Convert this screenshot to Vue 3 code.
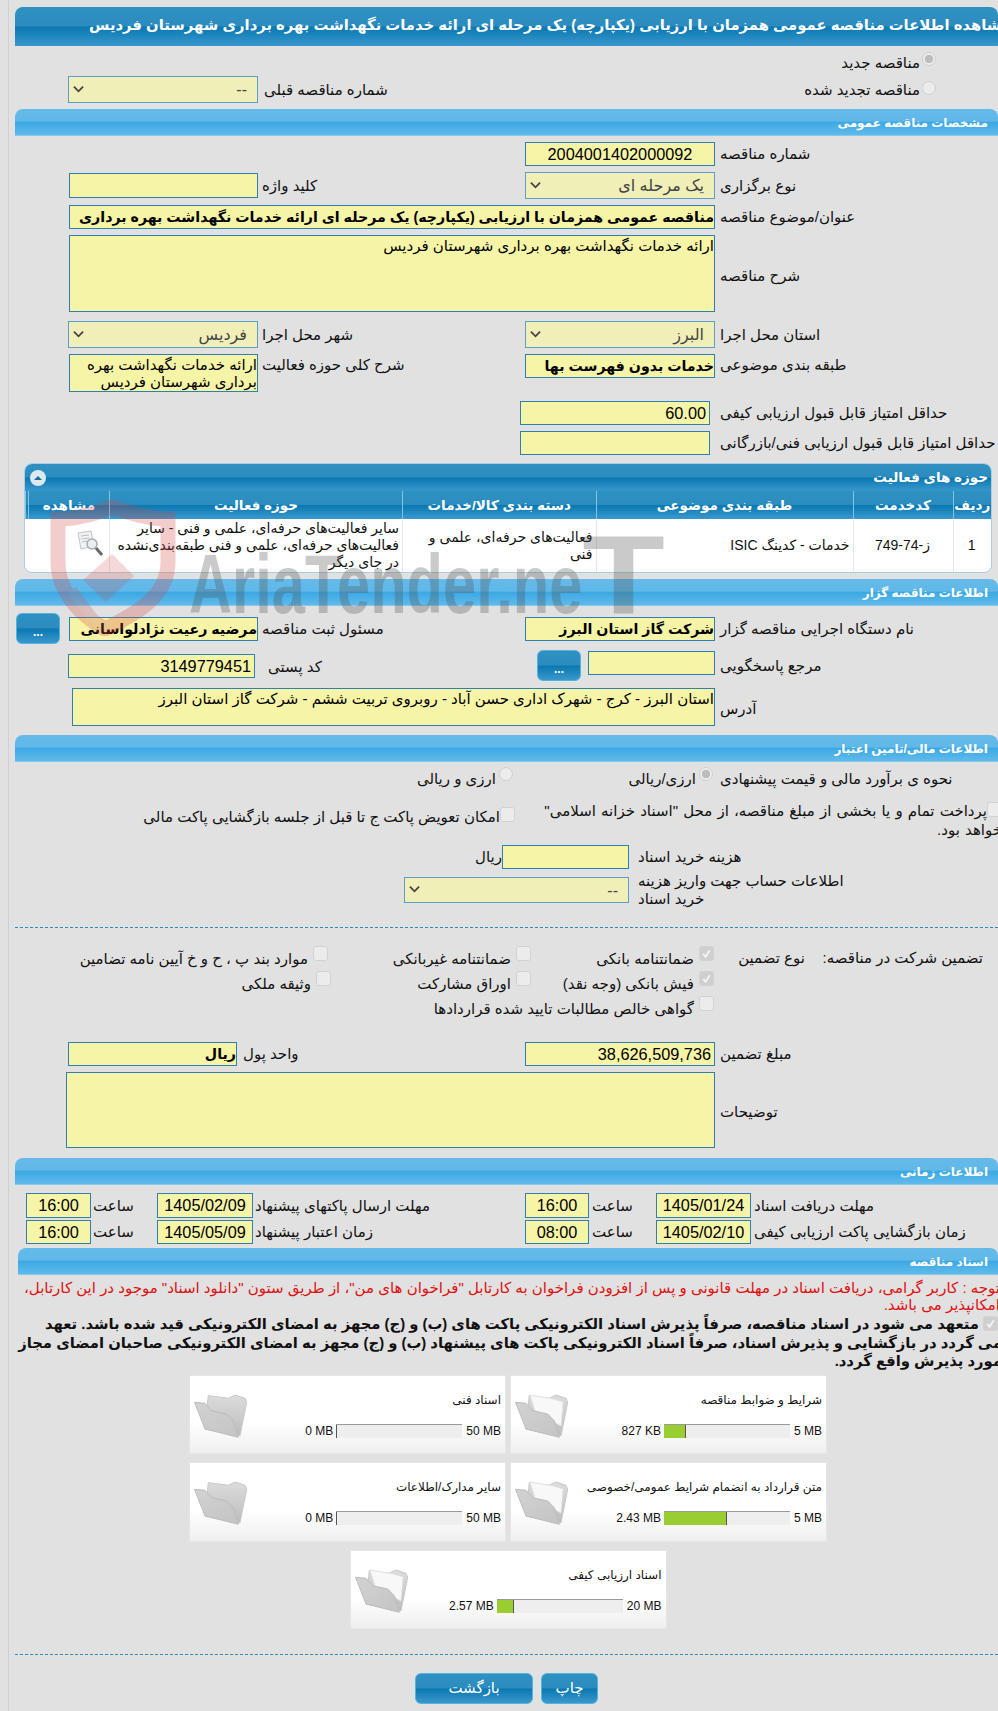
<script setup>
const cards = [
  { title: 'شرایط و ضوابط مناقصه', value: '827 KB', limit: '5 MB', pct: 17, files: true },
  { title: 'اسناد فنی', value: '0 MB', limit: '50 MB', pct: 0, files: false },
  { title: 'متن قرارداد به انضمام شرایط عمومی/خصوصی', value: '2.43 MB', limit: '5 MB', pct: 49, files: true },
  { title: 'سایر مدارک/اطلاعات', value: '0 MB', limit: '50 MB', pct: 0, files: false },
  { title: 'اسناد ارزیابی کیفی', value: '2.57 MB', limit: '20 MB', pct: 13, files: true }
]
</script>

<template>
  <div class="page">
    <h1 class="title"><span>مشاهده اطلاعات مناقصه عمومی همزمان با ارزیابی (یکپارچه) یک مرحله ای ارائه خدمات نگهداشت بهره برداری شهرستان فردیس</span></h1>

    <div class="radio-row first"><i class="radio on"></i><span>مناقصه جدید</span></div>
    <div class="row prev">
      <div class="radio-row inner"><i class="radio"></i><span>مناقصه تجدید شده</span></div>
      <div class="ll">شماره مناقصه قبلی</div>
      <div class="f sel w190 h27">--<svg class="chev" viewBox="0 0 12 8"><path d="M1 1.5l5 5 5-5" /></svg></div>
    </div>

    <div class="sec mt6">مشخصات مناقصه عمومی</div>

    <div class="row mt6">
      <div class="lr">شماره مناقصه</div>
      <div class="f w190 center num">2004001402000092</div>
    </div>
    <div class="row mt6">
      <div class="lr">نوع برگزاری</div>
      <div class="f sel w190 h27">یک مرحله ای<svg class="chev" viewBox="0 0 12 8"><path d="M1 1.5l5 5 5-5" /></svg></div>
      <div class="ll">کلید واژه</div>
      <div class="f w189 h25"></div>
    </div>
    <div class="row mt6">
      <div class="lr">عنوان/موضوع مناقصه</div>
      <div class="f w646 strong">مناقصه عمومی همزمان با ارزیابی (یکپارچه) یک مرحله ای ارائه خدمات نگهداشت بهره برداری</div>
    </div>
    <div class="row mt6">
      <div class="lr low">شرح مناقصه</div>
      <div class="f area w646 h77">ارائه خدمات نگهداشت بهره برداری شهرستان فردیس</div>
    </div>
    <div class="row mt9">
      <div class="lr">استان محل اجرا</div>
      <div class="f sel w190 h27">البرز<svg class="chev" viewBox="0 0 12 8"><path d="M1 1.5l5 5 5-5" /></svg></div>
      <div class="ll">شهر محل اجرا</div>
      <div class="f sel w190 h27">فردیس<svg class="chev" viewBox="0 0 12 8"><path d="M1 1.5l5 5 5-5" /></svg></div>
    </div>
    <div class="row top mt6">
      <div class="lr up">طبقه بندی موضوعی</div>
      <div class="f w190 strong">خدمات بدون فهرست بها</div>
      <div class="ll up">شرح کلی حوزه فعالیت</div>
      <div class="f area two w189 h38">ارائه خدمات نگهداشت بهره برداری شهرستان فردیس</div>
    </div>
    <div class="row mt9">
      <div class="lr">حداقل امتیاز قابل قبول ارزیابی کیفی</div>
      <div class="f w190 shift num">60.00</div>
    </div>
    <div class="row mt6">
      <div class="lr">حداقل امتیاز قابل قبول ارزیابی فنی/بازرگانی</div>
      <div class="f w190 shift"></div>
    </div>

    <section class="panel">
      <header class="panel-head">
        <span>حوزه های فعالیت</span>
        <svg class="toggle" viewBox="0 0 16 16"><circle cx="8" cy="8" r="8" /><path d="M4 10l4-4 4 4z" /></svg>
      </header>
      <table class="grid">
        <colgroup>
          <col class="c1" /><col class="c2" /><col class="c3" /><col class="c4" /><col class="c5" /><col class="c6" /><col class="c7" />
        </colgroup>
        <thead>
          <tr>
            <th>ردیف</th><th>کدخدمت</th><th>طبقه بندی موضوعی</th><th>دسته بندی کالا/خدمات</th><th>حوزه فعالیت</th><th>مشاهده</th><th></th>
          </tr>
        </thead>
        <tbody>
          <tr>
            <td class="mid">1</td>
            <td class="mid">ز-74-749</td>
            <td>خدمات - کدینگ ISIC</td>
            <td>فعالیت‌های حرفه‌ای، علمی و فنی</td>
            <td>سایر فعالیت‌های حرفه‌ای، علمی و فنی - سایر فعالیت‌های حرفه‌ای، علمی و فنی طبقه‌بندی‌نشده در جای دیگر</td>
            <td class="view" colspan="2">
              <svg class="doc" viewBox="0 0 29 28">
                <path d="M1 3l13-2 3 15-13 3z" fill="#f2f2f2" stroke="#c4c4c4" />
                <path d="M4 6l8-1M4.5 9l8-1M5 12l5-1" stroke="#bdbdbd" fill="none" />
                <circle cx="15" cy="14" r="5" fill="#e8eef2" stroke="#aaa" stroke-width="1.5" />
                <path d="M19 18l6 7" stroke="#6a6a6a" stroke-width="3" />
              </svg>
            </td>
          </tr>
        </tbody>
      </table>
    </section>

    <div class="sec mt6">اطلاعات مناقصه گزار</div>

    <div class="row h31 mt7">
      <div class="lr">نام دستگاه اجرایی مناقصه گزار</div>
      <div class="f w190 strong">شرکت گاز استان البرز</div>
      <div class="ll">مسئول ثبت مناقصه</div>
      <div class="f w189 strong">مرضیه رعیت نژادلواسانی</div>
      <button class="dots gap9">...</button>
    </div>
    <div class="row top h31 mt6 second">
      <div class="lr">مرجع پاسخگویی</div>
      <div class="f w127"></div>
      <button class="dots gap7">...</button>
      <div class="ll post">کد پستی</div>
      <div class="f w187 num pc">3149779451</div>
    </div>
    <div class="row mt7">
      <div class="lr low">آدرس</div>
      <div class="f area w643 h38">استان البرز - کرج - شهرک اداری حسن آباد - روبروی تربیت ششم - شرکت گاز استان البرز</div>
    </div>

    <div class="sec mt9">اطلاعات مالی/تامین اعتبار</div>

    <div class="row estimate">
      <div class="lr">نحوه ی برآورد مالی و قیمت پیشنهادی</div>
      <div class="opt"><i class="radio on"></i><span>ارزی/ریالی</span></div>
      <div class="opt"><i class="radio"></i><span>ارزی و ریالی</span></div>
    </div>
    <div class="row top pay">
      <div class="pay-r"><i class="check"></i>پرداخت تمام و یا بخشی از مبلغ مناقصه، از محل "اسناد خزانه اسلامی"<br />خواهد بود.</div>
      <div class="pay-l"><i class="check"></i>امکان تعویض پاکت ج تا قبل از جلسه بازگشایی پاکت مالی</div>
    </div>
    <div class="row mt5">
      <div class="lf">هزینه خرید اسناد</div>
      <div class="f w127"></div>
      <span>ریال</span>
    </div>
    <div class="row top mt5 acct">
      <div class="lf two-line">اطلاعات حساب جهت واریز هزینه<br />خرید اسناد</div>
      <div class="f sel w225 h26 down3">--<svg class="chev" viewBox="0 0 12 8"><path d="M1 1.5l5 5 5-5" /></svg></div>
    </div>

    <hr class="dash mt20" />

    <div class="guar">
      <div class="g-h1">تضمین شرکت در مناقصه:</div>
      <div class="g-h2">نوع تضمین</div>
      <div class="g-c"><i class="check on"><svg viewBox="0 0 14 14"><path d="M3.5 7.5l2.5 3 4.5-7" /></svg></i>ضمانتنامه بانکی</div>
      <div class="g-c"><i class="check"></i>ضمانتنامه غیربانکی</div>
      <div class="g-c nudge"><i class="check"></i>موارد بند پ ، ح و خ آیین نامه تضامین</div>
      <div class="g-c col3"><i class="check on"><svg viewBox="0 0 14 14"><path d="M3.5 7.5l2.5 3 4.5-7" /></svg></i>فیش بانکی (وجه نقد)</div>
      <div class="g-c"><i class="check"></i>اوراق مشارکت</div>
      <div class="g-c"><i class="check"></i>وثیقه ملکی</div>
      <div class="g-c col3 wide"><i class="check"></i>گواهی خالص مطالبات تایید شده قراردادها</div>
    </div>

    <div class="row mt21">
      <div class="lr">مبلغ تضمین</div>
      <div class="f w190 num">38,626,509,736</div>
      <div class="ll cash">واحد پول</div>
      <div class="f w169 strong">ریال</div>
    </div>
    <div class="row mt6">
      <div class="lr low">توضیحات</div>
      <div class="f area w649 h76"></div>
    </div>

    <div class="sec mt10">اطلاعات زمانی</div>

    <div class="row mt8 h25">
      <div class="tl">مهلت دریافت اسناد</div>
      <div class="f w95 h25 center num">1405/01/24</div>
      <div class="sa">ساعت</div>
      <div class="f w64 h25 center num">16:00</div>
      <div class="tl2">مهلت ارسال پاکتهای پیشنهاد</div>
      <div class="f w96 h25 center num">1405/02/09</div>
      <div class="sa2">ساعت</div>
      <div class="f w65 h25 center num">16:00</div>
    </div>
    <div class="row mt2">
      <div class="tl">زمان بازگشایی پاکت ارزیابی کیفی</div>
      <div class="f w95 center num">1405/02/10</div>
      <div class="sa">ساعت</div>
      <div class="f w64 center num">08:00</div>
      <div class="tl2">زمان اعتبار پیشنهاد</div>
      <div class="f w96 center num">1405/05/09</div>
      <div class="sa2">ساعت</div>
      <div class="f w65 center num">16:00</div>
    </div>

    <div class="sec docs mt4">اسناد مناقصه</div>

    <p class="note">توجه : کاربر گرامی، دریافت اسناد در مهلت قانونی و پس از افزودن فراخوان به کارتابل "فراخوان های من"، از طریق ستون "دانلود اسناد" موجود در این کارتابل،<br />امکانپذیر می باشد.</p>

    <p class="pledge"><i class="check on"><svg viewBox="0 0 14 14"><path d="M3.5 7.5l2.5 3 4.5-7" /></svg></i>متعهد می شود در اسناد مناقصه، صرفاً پذیرش اسناد الکترونیکی پاکت های (ب) و (ج) مجهز به امضای الکترونیکی قید شده باشد. تعهد<br />می گردد در بازگشایی و پذیرش اسناد، صرفاً اسناد الکترونیکی پاکت های پیشنهاد (ب) و (ج) مجهز به امضای الکترونیکی صاحبان امضای مجاز<br />مورد پذیرش واقع گردد.</p>

    <div class="cards">
      <article v-for="c in cards" :key="c.title" class="card">
        <div class="card-body">
          <div class="card-title">{{ c.title }}</div>
          <div class="meter">
            <span class="limit">{{ c.limit }}</span>
            <span class="bar"><b :style="{ width: c.pct + '%' }"></b></span>
            <span class="val">{{ c.value }}</span>
          </div>
        </div>
        <svg class="folder" viewBox="0 0 54 45">
          <defs>
            <linearGradient id="fb" x1="0" y1="0" x2="0" y2="1"><stop offset="0" stop-color="#dcdcdc" /><stop offset="1" stop-color="#bdbdbd" /></linearGradient>
            <linearGradient id="ff" x1="0" y1="0" x2="1" y2="1"><stop offset="0" stop-color="#d2d2d2" /><stop offset="1" stop-color="#c4c4c4" /></linearGradient>
          </defs>
          <path d="M14.3 1.7L34.3 4.3 41 1 51 4.3 52.7 8.3 46 41.7 11 35Z" fill="url(#fb)" stroke="#c8c8c8" stroke-linejoin="round" />
          <path v-if="c.files" d="M15 1L38 5 48 8 46 32 20 17Z" fill="#f8f8f8" stroke="#e4e4e4" />
          <path d="M0.5 8.3L11 9.3 17.7 16.7 32.7 20 39.3 26.7 44.3 43.3 11 35Z" fill="url(#ff)" stroke="#bcbcbc" stroke-linejoin="round" />
        </svg>
      </article>
    </div>

    <hr class="dash end" />

    <div class="actions">
      <button class="btn print">چاپ</button>
      <button class="btn back">بازگشت</button>
    </div>

    <div class="wm" aria-hidden="true">
      <svg class="shield" viewBox="0 0 126 136">
        <path d="M63 7C42 15 24 19 8 19L8 62C8 96 36 118 55 129C86 114 118 96 118 62L118 19C100 19 84 15 63 7Z" fill="none" stroke="#d64646" stroke-width="15" />
        <path d="M33 80L62 54 84 76 56 102Z" fill="#d64646" opacity=".75" />
        <path d="M22 90L52 130" fill="none" stroke="#c86060" stroke-width="10" />
      </svg>
      <span class="wm-text">AriaTender.ne<span class="wm-t">T</span></span>
    </div>
  </div>
</template>

<style scoped>
.page {
  position: relative;
  width: 998px;
  height: 1711px;
  overflow: hidden;
  box-sizing: border-box;
  padding: 7px 0 0 15px;
  background: #e1e1e1;
  direction: rtl;
  color: #111;
  font: 15px/18px "Liberation Sans", "DejaVu Sans", sans-serif;
}
.page::before {
  content: "";
  position: absolute;
  top: 0;
  bottom: 0;
  left: 8px;
  width: 1px;
  background: #d0d0d0;
}
i { display: block; flex: none; }
p, h1 { margin: 0; }

.title {
  display: flex;
  justify-content: flex-end;
  height: 39px;
  box-sizing: border-box;
  padding: 0 0 3px 74px;
  align-items: center;
  overflow: hidden;
  white-space: nowrap;
  border-radius: 8px 8px 0 0;
  color: #fff;
  font-size: 14.8px;
  font-weight: bold;
  background: linear-gradient(#2f90c1 0, #2c8cbf 48%, #0a78b1 52%, #3a98cd 100%);
}
.title span { flex: none; }

.sec {
  height: 27px;
  box-sizing: border-box;
  padding: 5px 10px 0 0;
  line-height: 19px;
  border-radius: 8px 8px 0 0;
  border-bottom: 1px solid #84c9ee;
  color: #fff;
  font-size: 12px;
  font-weight: bold;
  background: linear-gradient(#64bbea 0, #60b8e9 47%, #3ba8e3 50%, #60baeb 100%);
}
.docs { margin-left: 3px; }

.row { display: flex; align-items: center; }
.row.top { align-items: flex-start; }
.lr, .ll, .lf, .tl, .tl2 { flex: none; box-sizing: border-box; text-align: left; white-space: nowrap; }
.lr { width: 283px; padding-left: 5px; }
.ll { width: 267px; padding-left: 4px; }
.ll.cash { width: 288px; padding-left: 6px; }
.up { padding-top: 2px; }
.low { padding-top: 4px; }

.f {
  position: relative;
  flex: none;
  height: 24px;
  box-sizing: border-box;
  overflow: hidden;
  border: 1px solid #2f7fb0;
  background: #f6f4a6;
  color: #000;
  line-height: 22px;
  white-space: nowrap;
}
.strong { font-size: 14.2px; font-weight: bold; }
.num { font-size: 16.3px; padding-right: 3px; }
.num.center, .center { padding: 0; text-align: center; }
.area { white-space: normal; line-height: 18px; padding-top: 1px; }
.two { line-height: 17px; padding-left: 10px; }
.sel {
  padding-right: 10px;
  border-color: #5b9fc9;
  background: #f0efb7;
  color: #444;
  font-size: 16px;
  line-height: 25px;
}
.chev {
  position: absolute;
  left: 4px;
  top: 50%;
  width: 11px;
  height: 8px;
  margin-top: -5px;
  fill: none;
  stroke: #444;
  stroke-width: 2;
}
.w64 { width: 64px; } .w65 { width: 65px; } .w95 { width: 95px; } .w96 { width: 96px; }
.w127 { width: 127px; } .w169 { width: 169px; } .w187 { width: 187px; } .w189 { width: 189px; }
.w190 { width: 190px; } .w225 { width: 225px; } .w643 { width: 643px; } .w646 { width: 646px; } .w649 { width: 649px; }
.h25 { height: 25px; } .h26 { height: 26px; } .h27 { height: 27px; } .h31 { height: 31px; }
.h38 { height: 38px; } .h76 { height: 76px; } .h77 { height: 77px; }
.shift { margin-right: 5px; }
.mt2 { margin-top: 2px; } .mt4 { margin-top: 4px; } .mt5 { margin-top: 5px; } .mt6 { margin-top: 6px; }
.mt7 { margin-top: 7px; } .mt8 { margin-top: 8px; } .mt9 { margin-top: 9px; } .mt10 { margin-top: 10px; }
.mt20 { margin-top: 20px; } .mt21 { margin-top: 21px; }

.radio {
  width: 14px;
  height: 14px;
  box-sizing: border-box;
  border: 1px solid #cfcfcf;
  border-radius: 50%;
  background: #ececec;
}
.radio.on { background: radial-gradient(circle, #bdbdbd 0 4px, #ececec 4.5px); }
.check {
  position: relative;
  width: 15px;
  height: 15px;
  box-sizing: border-box;
  border: 1px solid #d2d2d2;
  border-radius: 3px;
  background: #ececec;
}
.check.on { background: #cfcfcf; }
.check svg { display: block; width: 13px; height: 13px; fill: none; stroke: #f4f4f4; stroke-width: 2; }

.radio-row { display: flex; gap: 2px; line-height: 20px; }
.radio-row span { padding-top: 1px; }
.first { height: 30px; box-sizing: border-box; padding: 6px 62px 0 0; }
.prev { height: 27px; }
.prev .inner { width: 468px; box-sizing: border-box; height: 27px; padding: 5px 62px 0 0; flex: none; }
.prev .inner span { padding-top: 0; margin-top: -1px; }
.prev .ll { width: 272px; padding-left: 6px; }

.panel {
  width: 968px;
  height: 110px;
  box-sizing: border-box;
  margin: 8px 6px 0 0;
  overflow: hidden;
  border: 1px solid #a9cfe4;
  border-radius: 8px;
  background: #fff;
}
.panel-head {
  display: flex;
  align-items: center;
  justify-content: space-between;
  height: 27px;
  padding: 0 3px 0 5px;
  color: #fff;
  font-size: 13.5px;
  font-weight: bold;
  background: linear-gradient(#2f90c1 0, #2c8cbf 48%, #0a78b1 52%, #3a98cd 100%);
}
.toggle { width: 16px; height: 16px; fill: #dde9f1; }
.toggle path { fill: #1a6f9f; }
.grid { width: 100%; table-layout: fixed; border-collapse: collapse; font-size: 14px; line-height: 17px; }
.c1 { width: 38px; } .c2 { width: 100px; } .c3 { width: 257px; } .c4 { width: 193.5px; } .c5 { width: 293px; } .c6 { width: 81px; } .c7 { width: 3.5px; }
.grid th {
  height: 28px;
  padding: 0;
  border-left: 1px solid #7cc6ea;
  color: #fff;
  font-size: 13.5px;
  font-weight: bold;
  background: linear-gradient(#2f90c1 0, #2c8cbf 48%, #0a78b1 52%, #3a98cd 100%);
}
.grid td {
  height: 53px;
  padding: 0 3px 0 2px;
  box-sizing: border-box;
  border-left: 1px solid #e4e8ea;
  vertical-align: middle;
  text-align: right;
}
.grid td.mid { text-align: center; }
.grid td:last-child { border-left: 0; }
.view { padding-right: 3px; }
.doc { display: block; width: 29px; height: 28px; margin-top: -3px; }

.dots {
  flex: none;
  width: 44px;
  height: 31px;
  padding: 6px 0 0;
  border: 1px solid #4fb4e0;
  border-radius: 6px;
  color: #fff;
  font: bold 12px/14px "Liberation Sans", sans-serif;
  background: linear-gradient(#2f90c1 0, #2c8cbf 48%, #0a78b1 52%, #3a98cd 100%);
}
.gap9 { margin-right: 9px; }
.gap7 { margin-right: 7px; }
.second .lr { padding-top: 7px; }
.second .w127 { margin-top: 1px; }
.post { width: 282px; padding: 8px 0 0 13px; }
.pc { margin-top: 4px; }

.estimate { height: 24px; margin-top: 5px; }
.opt { display: flex; gap: 3px; flex: none; box-sizing: border-box; padding-right: 2px; }
.opt:nth-child(2) { width: 200px; }
.opt .radio { margin-top: -3px; }
.pay { margin-top: 8px; height: 41px; }
.pay-r { flex: none; width: 485px; box-sizing: border-box; margin-right: -4px; padding-top: 2px; line-height: 19px; white-space: nowrap; word-spacing: 1px; }
.pay-r .check { display: inline-block; vertical-align: -1px; }
.pay-l { display: flex; margin-right: 2px; margin-top: 9px; flex: none; white-space: nowrap; }
.pay-l .check { margin-top: -1px; }
.lf { width: 369px; padding-left: 9px; }
.two-line { line-height: 18px; margin-top: -2px; }
.acct { height: 33px; }
.down3 { margin-top: 3px; }

.dash { height: 0; margin-bottom: 0; margin-left: 0; margin-right: 0; border: 0; border-top: 1px dashed #2a8cc0; }
.guar {
  display: grid;
  grid-template-columns: 178px 91px 183px 200px auto;
  grid-auto-rows: 25px;
  margin: 18px 15px 0 0;
}
.g-h1, .g-h2 { padding-top: 3px; white-space: nowrap; }
.g-c { display: flex; gap: 5px; white-space: nowrap; line-height: 25px; }
.col3 { grid-column: 3; }
.wide { grid-column: 3 / span 3; }
.nudge { margin-right: 3px; }

.tl { width: 247px; padding-left: 3px; }
.tl2 { width: 272px; padding-left: 2px; }
.sa { width: 67px; box-sizing: border-box; padding-left: 3px; text-align: left; }
.sa2 { width: 66px; box-sizing: border-box; padding-left: 2px; text-align: left; }

.note { margin: 4px -2px 0 0; color: #e01010; font-size: 15px; line-height: 17px; white-space: nowrap; }
.pledge { margin: 0 -4px 0 0; padding-top: 2px; font-size: 14.8px; font-weight: bold; line-height: 18.5px; white-space: nowrap; }
.pledge .check { display: inline-block; vertical-align: -2px; margin-left: 4px; margin-right: 4px; }

.cards {
  display: flex;
  flex-wrap: wrap;
  justify-content: center;
  gap: 8px 4px;
  width: 638px;
  margin: 4px 171px 0 0;
}
.card {
  display: flex;
  justify-content: space-between;
  width: 317px;
  height: 79.5px;
  box-sizing: border-box;
  padding: 0 4px;
  border: 1px solid #e6e6e6;
  background: linear-gradient(#fff 0, #fff 60%, #efefef 100%);
  font-size: 12px;
}
.card-title { margin-top: 14px; height: 20px; white-space: nowrap; font-size: 12px; line-height: 20px; }
.meter { display: flex; align-items: center; gap: 3px; margin-top: 13px; height: 16px; white-space: nowrap; }
.limit, .val { direction: ltr; unicode-bidi: isolate; }
.limit { margin-left: 1px; }
.bar {
  display: block;
  width: 126px;
  height: 14px;
  box-sizing: border-box;
  direction: ltr;
  border-top: 1px solid #999;
  background: #eee;
}
.bar b { display: block; height: 13px; border-right: 1px solid #555; background: #9acd32; }
.folder { flex: none; width: 54px; height: 45px; margin-top: 18px; }

.end { margin-top: 24.5px; }
.actions { display: flex; justify-content: center; gap: 8px; margin-top: 18px; }
.btn {
  height: 31px;
  padding: 0;
  border: 1px solid #4fb4e0;
  border-radius: 6px;
  color: #fff;
  font: 15px "Liberation Sans", "DejaVu Sans", sans-serif;
  background: linear-gradient(#2f90c1 0, #2c8cbf 48%, #0a78b1 52%, #3a98cd 100%);
}
.print { width: 57px; }
.back { width: 118px; }

.wm { position: absolute; inset: 0; pointer-events: none; direction: ltr; }
.shield { position: absolute; left: 50px; top: 500px; width: 126px; height: 136px; opacity: .27; }
.wm-text {
  position: absolute;
  left: 189px;
  top: 525px;
  color: rgba(80, 80, 80, .3);
  font: bold 84px/100px "Liberation Sans", sans-serif;
  white-space: nowrap;
  transform: scaleX(.71);
  transform-origin: 0 0;
}
.wm-t { display: inline-block; font-size: 112px; line-height: 100px; transform: scaleX(1.7); transform-origin: 0 100%; }
</style>

<style>
html, body { margin: 0; background: #e1e1e1; overflow: hidden; }
</style>
